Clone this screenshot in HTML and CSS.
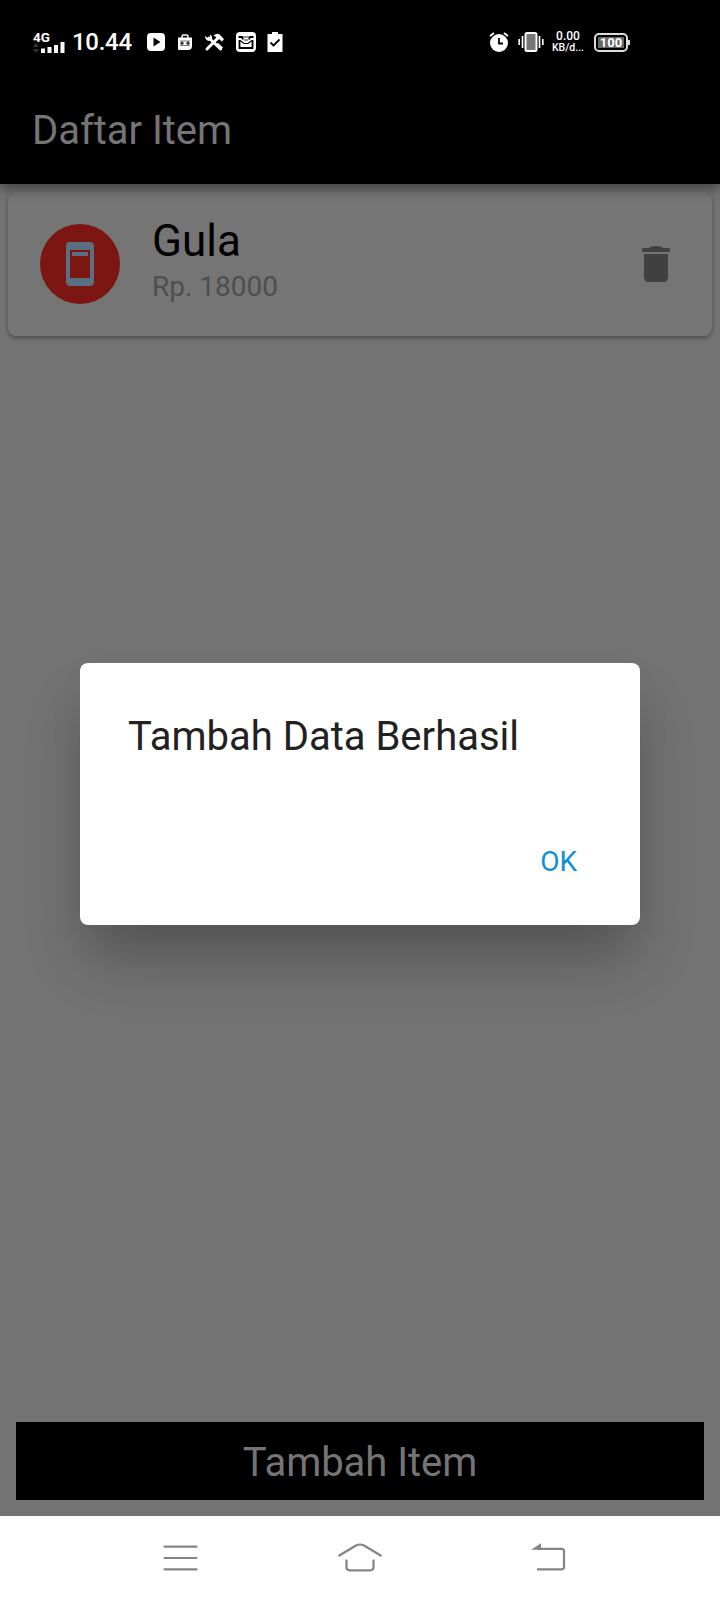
FILE: index.html
```html
<!DOCTYPE html>
<html lang="id">
<head>
<meta charset="utf-8">
<title>Daftar Item</title>
<link rel="stylesheet" href="styles.css">
</head>
<body>
<div class="phone">
  <header class="top">
    <div class="status">
      <div class="network">
        <span class="gen">4G</span>
        <svg class="signal" width="32" height="10" viewBox="0 0 32 10"><path d="M0 4l3-4 3 4zM0 6l3 4 3-4z" fill="#333"/><path d="M8 5.500h4v4.500H8zM14.500 4h4v6h-4zM21 2h4v8h-4zM27.500-1h4v11h-4z" fill="#fff"/></svg>
      </div>
      <span class="clock">10.44</span>
      <div class="notices">
        <svg width="20" height="18" viewBox="0 0 20 18"><rect x="1" y="0" width="18" height="18" rx="4" fill="#fff"/><path d="M7.500 4.500v9l7-4.500z" fill="#000"/></svg>
        <svg width="16" height="18" viewBox="0 0 16 18"><path d="M5 5V3.500Q5 2 6.500 2h3Q11 2 11 3.500V5" fill="none" stroke="#fff" stroke-width="1.500"/><path d="M1 4.500h14V13q0 4-4 4H2q-1 0-1-1z" fill="#fff"/><path d="M3 8h10M3 12.500h10" stroke="#777"/><circle cx="5" cy="10.200" r="1.600" fill="#333"/><circle cx="11" cy="10.200" r="1.600" fill="#333"/></svg>
        <svg width="20" height="18" viewBox="0 0 20 18"><path d="M5 5l11.500 11M14 5L3 16" stroke="#fff" stroke-width="3" stroke-linecap="round"/><path d="M1 3l3 2 2-1V1.500Q9 3 7.500 6.500L4.500 8Q1 7 1 3zM9.500 2.500Q14-1 17 3l3 3-2 2.500-3-2.500-2 1-1-3zM12 11l2-1 5 4.500-2 2.500z" fill="#fff"/></svg>
        <svg width="20" height="20" viewBox="0 0 20 20"><rect width="20" height="20" rx="4" fill="#fff"/><path d="M2.500 5H6l1 2.500M17.500 5H14l-1 2.500M3.500 8v8h13V8" fill="none" stroke="#000" stroke-width="1.800"/><path d="M4 8.500l4 3h4l4-3" fill="none" stroke="#000" stroke-width="1.200"/><path d="M7 5h6M8 8h4" stroke="#333"/></svg>
        <svg width="16" height="20" viewBox="0 0 16 20"><path d="M.5 2H5V0h6v2h4.500v18H.5z" fill="#fff"/><path d="M3.500 10.500l3 3 6-6" fill="none" stroke="#000" stroke-width="1.800"/></svg>
      </div>
      <div class="system">
        <svg width="20" height="20" viewBox="0 0 20 20"><circle cx="10" cy="11" r="9" fill="#fff"/><path d="M1 4l4-3M19 4l-4-3" stroke="#fff" stroke-width="1.800"/><path d="M10 6v5.500h4" fill="none" stroke="#000" stroke-width="1.800"/></svg>
        <svg width="26" height="20" viewBox="0 0 26 20"><rect x="7.500" y="1" width="11" height="18" rx="1.500" fill="#777" stroke="#fff" stroke-width="2"/><path d="M4.500 4v12M1.200 7v6M21.500 4v12M24.800 7v6" stroke="#fff" stroke-width="1.700"/></svg>
        <div class="speed"><span>0.00</span><span class="unit">KB/d...</span></div>
        <div class="battery"><span>100</span></div>
      </div>
    </div>
    <h1 class="title">Daftar Item</h1>
  </header>
  <main class="content">
    <article class="card">
      <div class="avatar">
        <svg width="48" height="48" viewBox="0 0 24 24"><path fill="#5a7080" fill-rule="evenodd" d="M17 1H7a2 2 0 0 0-2 2v18c0 1.100.900 2 2 2h10c1.100 0 2-.900 2-2V3c0-1.100-.900-2-2-2zm0 18H7V5h10zM8 6h8v2H8z"/></svg>
      </div>
      <div class="info">
        <div class="name">Gula</div>
        <div class="price">Rp. 18000</div>
      </div>
      <svg class="delete" width="48" height="48" viewBox="0 0 24 24"><path fill="#404040" d="M6 19c0 1.100.900 2 2 2h8c1.100 0 2-.900 2-2V7H6zM19 4h-3.500l-1-.7q-2.500-.6-5 0l-1 .7H5v2h14z"/></svg>
    </article>
    <div class="add">Tambah Item</div>
  </main>
  <nav class="nav">
    <svg width="48" height="40" viewBox="0 0 48 40"><path d="M8.500 10.700h32M8.500 22h32M8.500 33.300h32" stroke="#858585" stroke-width="2.200" stroke-linecap="round"/></svg>
    <svg width="48" height="40" viewBox="0 0 48 40"><path d="M2.500 20L20 9.500Q24 7.500 28 9.500L45.500 20M10.500 23.500V31q0 3.300 3.300 3.300h20.400q3.300 0 3.300-3.300v-7.500" fill="none" stroke="#858585" stroke-width="2.200"/></svg>
    <svg class="back" width="48" height="40" viewBox="0 0 48 40"><path d="M12 12.800h24.500q2.500 0 2.500 2.500V31q0 2.300-2.500 2.300H12" fill="none" stroke="#858585" stroke-width="2.200"/><path d="M6 13.700l10-6.500v6.500z" fill="#858585"/></svg>
  </nav>
  <section class="dialog">
    <h2 class="message">Tambah Data Berhasil</h2>
    <button class="ok">OK</button>
  </section>
</div>
</body>
</html>
```
FILE: styles.css
```css
* { box-sizing: border-box; }
body { margin: 0; font-family: Roboto, "Liberation Sans", sans-serif; }
h1, h2 { margin: 0; font-weight: 400; }
svg { display: block; flex: none; overflow: visible; }
.phone { position: relative; width: 720px; height: 1600px; display: flex; flex-direction: column; background: #737373; overflow: hidden; }
.top { position: relative; z-index: 1; height: 184px; flex: none; background: #000; box-shadow: 0 5px 11px rgba(0,0,0,.42); }
.status { height: 72px; padding: 12px 90px 0 33px; display: flex; align-items: center; color: #fff; }
.network { width: 32px; height: 22px; margin-right: 7px; }
.gen { display: block; font-size: 13.500px; line-height: 12px; font-weight: 700; }
.clock { width: 60px; font-size: 24px; line-height: 28px; font-weight: 500; letter-spacing: -.300px; }
.notices { display: flex; align-items: center; gap: 11.200px; margin-left: 14px; }
.system { display: flex; align-items: center; margin-left: auto; }
.system svg { margin-right: 8px; }
.speed { width: 32px; margin-right: 10px; font-size: 12px; line-height: 11px; font-weight: 500; white-space: nowrap; display: flex; flex-direction: column; align-items: center; }
.unit { font-size: 10.500px; }
.system svg:first-child { margin-right: 9px; }
.battery { position: relative; width: 34px; height: 19px; margin-right: 2px; padding: 2px; border: 2px solid #ddd; border-radius: 5px; display: flex; }
.battery span { width: 100%; background: #666; font-size: 13px; line-height: 12px; font-weight: 700; text-align: center; }
.battery::after { content: ""; position: absolute; right: -4px; top: 5px; width: 2px; height: 5px; background: #ddd; }
.title { height: 112px; padding-left: 32px; line-height: 118px; font-size: 40px; letter-spacing: -.050px; color: #757575; }
.content { flex: 1; display: flex; flex-direction: column; justify-content: space-between; padding: 8px 8px 16px; }
.card { height: 144px; display: flex; align-items: center; padding: 0 32px; border-radius: 8px; background: #757575; box-shadow: 0 2px 4px rgba(0,0,0,.35); }
.avatar { width: 80px; height: 80px; display: grid; place-items: center; border-radius: 50%; background: #7b1612; }
.info { flex: 1; margin-left: 32px; padding-bottom: 5px; }
.name { font-size: 44px; line-height: 50px; color: #000; }
.price { font-size: 28px; line-height: 41px; color: #4e4e4e; }
.add { height: 78px; margin: 0 8px; background: #000; color: #757575; text-align: center; font-size: 40px; line-height: 82px; letter-spacing: -.050px; }
.nav { height: 84px; flex: none; display: flex; align-items: center; justify-content: center; gap: 132px; padding-bottom: 4px; background: #fff; }
.back { margin-left: 9px; margin-right: -9px; }
.dialog { position: absolute; z-index: 2; left: 80px; top: 663px; width: 560px; height: 262px; padding: 48px 48px 16px; display: flex; flex-direction: column; border-radius: 8px; background: #fff; box-shadow: 0 40px 60px -6px rgba(0,0,0,.24), 0 16px 44px -6px rgba(0,0,0,.06); }
.message { font-size: 40px; line-height: 52px; color: #212121; white-space: nowrap; }
.ok { align-self: flex-end; margin: 63px 15px 0 0; padding: 0; border: 0; background: none; font: 400 28px/72px Roboto, sans-serif; color: #0d8fd6; }
```
